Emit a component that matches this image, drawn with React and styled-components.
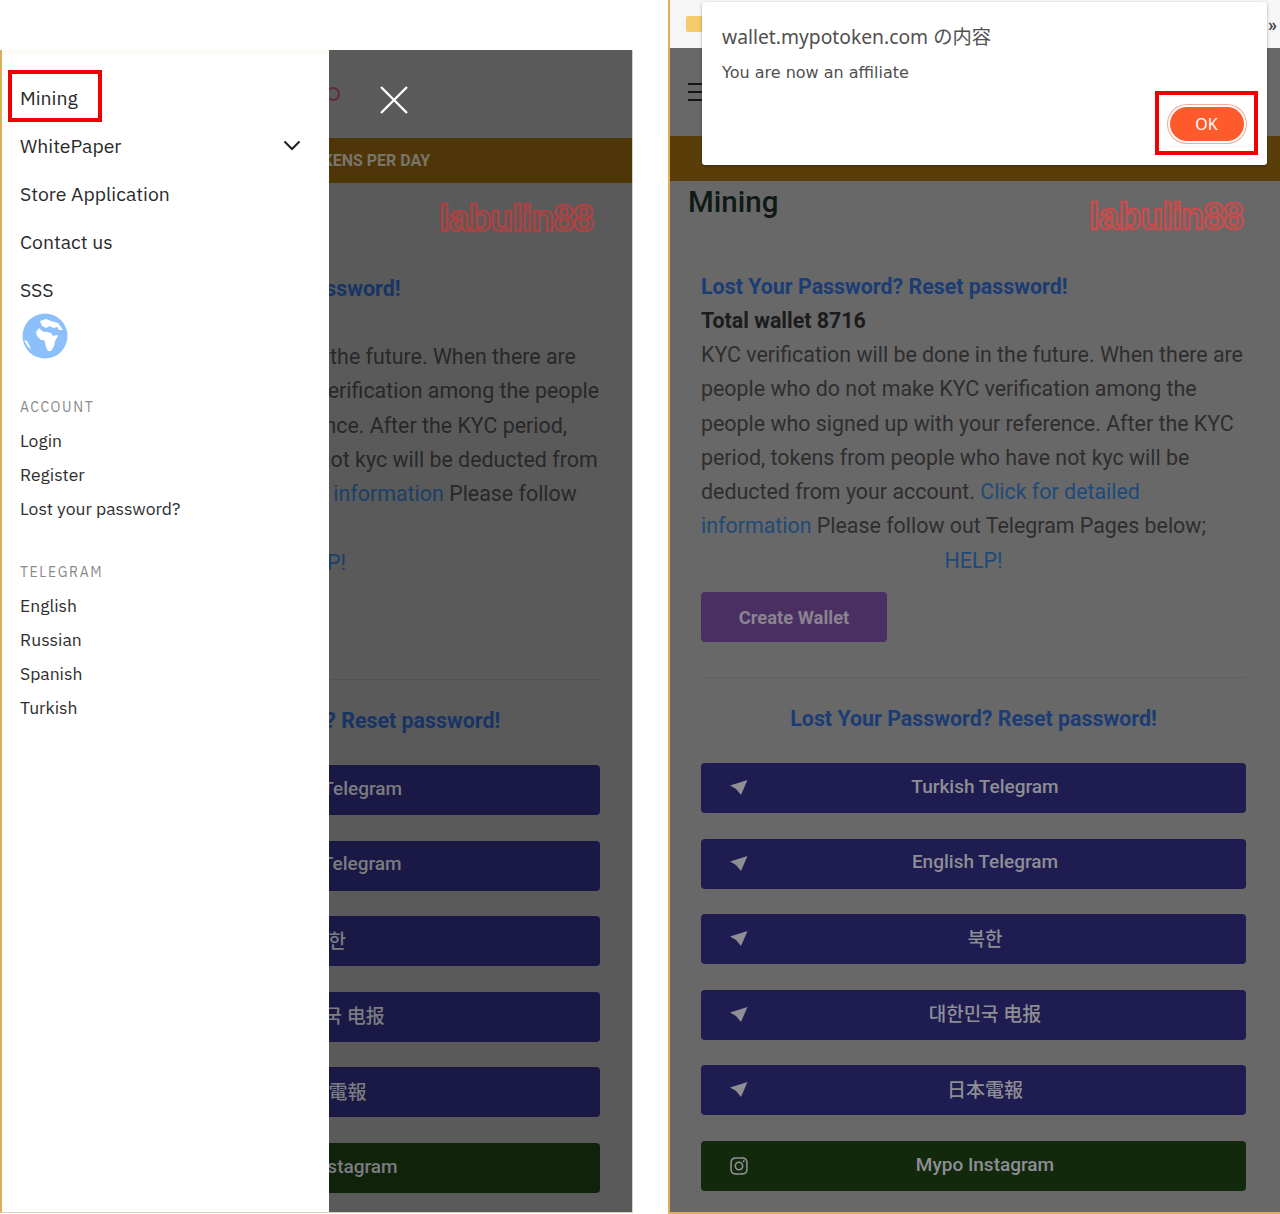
import styled, { createGlobalStyle } from "styled-components";
import { FaInstagram } from "react-icons/fa";

const GlobalStyle = createGlobalStyle`
  html, body {
    margin: 0;
    padding: 0;
    background: #fff;
    overflow: hidden;
  }
  * {
    box-sizing: border-box;
  }
`;

const Screen = styled.div`
  display: flex;
  gap: 35px;
  width: 1280px;
  height: 1214px;
  font-family: Roboto, "Noto Sans CJK KR", sans-serif;
`;

const LeftPhone = styled.section`
  position: relative;
  width: 633px;
  height: 1163px;
  margin-top: 50px;
  border-left: 2px solid #e0ad5c;
  border-right: 1px solid #d9d2c0;
  border-bottom: 1px solid #d9d2c0;
  overflow: hidden;
`;

const RightPhone = styled.section`
  position: relative;
  flex: 1;
  height: 1214px;
  border-left: 2px solid #e0ad5c;
  border-bottom: 2px solid #e0ad5c;
  overflow: hidden;
`;

const Scrim = styled.div`
  position: absolute;
  inset: 0;
  background: rgba(0, 0, 0, 0.13);
`;

/* browser chrome on the right shot */
const Toolbar = styled.div`
  display: flex;
  align-items: center;
  justify-content: space-between;
  height: 48px;
  padding: 0 3px 0 16px;
  background: #f6f6f6;
  color: #444;
  font-size: 18px;
  font-weight: 700;
`;

const Folder = styled.span`
  width: 20px;
  height: 16px;
  border-radius: 2px;
  background: #f5cb6c;
`;

const Page = styled.div`
  background: #686868;
  height: 100%;
`;

const Header = styled.header`
  display: flex;
  align-items: center;
  height: 88px;
  padding-left: 18px;
`;

const Burger = styled.span`
  width: 16px;
  height: 18px;
  border-top: 2px solid #141414;
  border-bottom: 2px solid #141414;
  background: linear-gradient(#141414, #141414) center / 100% 2px no-repeat;
`;

const LogoRing = styled.span`
  width: 14px;
  height: 14px;
  margin-left: 290px;
  border: 2px solid #6e3344;
  border-radius: 50%;
`;

const Band = styled.div`
  display: flex;
  align-items: center;
  justify-content: center;
  height: 45px;
  background: #5a3e0a;
  color: #8c8778;
  font-size: 16px;
  font-weight: 700;
`;

const BandText = styled.span`
  margin-left: 98px;
`;

const Content = styled.main`
  position: relative;
  padding: 0 ${(p) => p.$right}px 0 ${(p) => p.$left}px;
`;

const Title = styled.h1`
  height: 42px;
  margin: 0 0 47px -13px;
  color: #101a14;
  font-size: 29.5px;
  font-weight: 500;
  line-height: 42px;
`;

const Watermark = styled.div`
  position: absolute;
  top: 14px;
  right: ${(p) => p.$right}px;
  color: transparent;
  -webkit-text-stroke: 2.4px #c44e4e;
  font-family: "Liberation Sans", sans-serif;
  font-size: 37px;
  font-weight: 700;
  line-height: 44px;
  letter-spacing: -0.7px;
`;

const SectionLink = styled.h2`
  margin: 0;
  color: #1b3c74;
  font-size: 21.4px;
  font-weight: 700;
  line-height: 34px;
  text-align: ${(p) => (p.$center ? "center" : "left")};
`;

const Wallet = styled.div`
  color: #1c1c1c;
  font-size: 21.4px;
  font-weight: 700;
  line-height: 34px;
`;

const Body = styled.p`
  margin: 0;
  color: #2e2e2e;
  font-size: 21.4px;
  line-height: 34.3px;
`;

const Link = styled.a`
  color: #1f4a78;
`;

const Help = styled.div`
  color: #1f4a78;
  font-size: 21.4px;
  line-height: 34.3px;
  text-align: center;
`;

const CreateWallet = styled.button`
  display: block;
  width: 186px;
  height: 50px;
  margin-top: 14px;
  border: none;
  border-radius: 4px;
  background: #4a2f62;
  color: #8a8490;
  font-family: inherit;
  font-size: 18.4px;
  font-weight: 700;
`;

const Divider = styled.hr`
  height: 1px;
  margin: 35px 0 24px;
  border: none;
  background: #5f5f5f;
`;

const Buttons = styled.div`
  display: flex;
  flex-direction: column;
  gap: 25.6px;
  margin-top: 27px;
`;

const Social = styled.div`
  display: flex;
  align-items: center;
  height: 50px;
  border-radius: 4px;
  background: ${(p) => (p.$green ? "#12290c" : "#1e1c50")};
  color: #8e8e94;
  font-size: 19px;
  font-weight: 500;
`;

const SocialIcon = styled.span`
  display: flex;
  flex: none;
  width: 18px;
  margin: 0 -24px 1px 29px;
  font-size: 20px;
`;

const SocialLabel = styled.span`
  flex: 1;
  padding-bottom: 4px;
  text-align: center;
`;

/* menu drawer, left shot */
const Drawer = styled.aside`
  position: absolute;
  top: 0;
  bottom: 0;
  left: 0;
  width: 327px;
  padding: 18px 0 0 18px;
  background: #fff;
  border-top: 5px solid #fdfbf5;
  font-family: "IBM Plex Sans", Roboto, sans-serif;
`;

const MainNav = styled.nav`
  display: flex;
  flex-direction: column;
`;

const NavItem = styled.a`
  display: flex;
  align-items: center;
  justify-content: space-between;
  height: 48px;
  padding-right: 28px;
  color: #2a2a2a;
  font-size: 19.4px;
`;

const Globe = styled.svg`
  display: block;
  width: 46px;
  height: 46px;
  margin: 0 0 0 2px;
`;

const GroupTitle = styled.div`
  margin-top: ${(p) => p.$top}px;
  color: #8a8a8a;
  font-size: 14px;
  line-height: 20px;
  letter-spacing: 1.6px;
`;

const SubNav = styled.div`
  display: flex;
  flex-direction: column;
  margin-top: 7px;
`;

const SubItem = styled.a`
  color: #2e2e2e;
  font-size: 17.5px;
  line-height: 34px;
`;

const Marked = styled.div`
  position: absolute;
  top: 20px;
  left: 6px;
  width: 94px;
  height: 52px;
  border: 4px solid #f00000;
`;

const CloseIcon = styled.svg`
  position: absolute;
  top: 35px;
  left: 377px;
  width: 30px;
  height: 30px;
`;

/* browser alert, right shot */
const Alert = styled.div`
  position: absolute;
  top: 2px;
  left: 32px;
  width: 565px;
  height: 163px;
  padding: 22px 20px;
  border-radius: 3px;
  background: #fff;
  box-shadow: 0 1px 3px rgba(0, 0, 0, 0.35);
`;

const AlertTitle = styled.div`
  color: #505050;
  font-family: "Noto Sans", "Noto Sans CJK JP", sans-serif;
  font-size: 19.3px;
  line-height: 26px;
`;

const AlertText = styled.div`
  margin-top: 12px;
  color: #505050;
  font-family: "DejaVu Sans", sans-serif;
  font-size: 16px;
  line-height: 22px;
`;

const OkFrame = styled.div`
  position: absolute;
  top: 91px;
  right: 22px;
  display: flex;
  align-items: center;
  justify-content: center;
  width: 103px;
  height: 64px;
  border: 4px solid #f00000;
`;

const OkButton = styled.button`
  width: 74px;
  height: 34px;
  margin-top: 2px;
  border: none;
  border-radius: 17px;
  background: #ff5a2b;
  box-shadow: 0 0 0 2px #fff, 0 0 0 3px #f7a99a;
  color: #fff;
  font-family: "Noto Sans", sans-serif;
  font-size: 16px;
`;

const socials = [
  { label: "Turkish Telegram" },
  { label: "English Telegram" },
  { label: "북한" },
  { label: "대한민국 电报" },
  { label: "日本電報", jp: true },
  { label: "Mypo Instagram", green: true },
];

function PlaneIcon() {
  return (
    <svg width="18" height="15" viewBox="0 0 18 15" fill="currentColor">
      <path d="M17.5 0 0 5.5 6 9l5 6z" />
    </svg>
  );
}

function PageBody({ left, right, markRight }) {
  return (
    <Page>
      <Header>
        <Burger />
        <LogoRing />
      </Header>
      <Band>
        <BandText>TOKENS PER DAY</BandText>
      </Band>
      <Content $left={left} $right={right}>
        <Title>Mining</Title>
        <Watermark $right={markRight}>labulin88</Watermark>
        <SectionLink>Lost Your Password? Reset password!</SectionLink>
        <Wallet>Total wallet 8716</Wallet>
        <Body>
          KYC verification will be done in the future. When there are people
          who do not make KYC verification among the people who signed up with
          your reference. After the KYC period, tokens from people who have not
          kyc will be deducted from your account.{" "}
          <Link>Click for detailed information</Link> Please follow out Telegram
          Pages below;
        </Body>
        <Help>HELP!</Help>
        <CreateWallet>Create Wallet</CreateWallet>
        <Divider />
        <SectionLink $center>Lost Your Password? Reset password!</SectionLink>
        <Buttons>
          {socials.map((s) => (
            <Social key={s.label} $green={s.green}>
              <SocialIcon>{s.green ? <FaInstagram /> : <PlaneIcon />}</SocialIcon>
              <SocialLabel lang={s.jp ? "ja" : undefined}>{s.label}</SocialLabel>
            </Social>
          ))}
        </Buttons>
      </Content>
    </Page>
  );
}

function GlobeIcon() {
  return (
    <Globe viewBox="0 0 46 46">
      <circle cx="23" cy="23" r="22.5" fill="#8cc0fb" />
      <path
        fill="#fff"
        d="M17 15l-3 4 1 4 4 4h3l1 2 1 5 2 4h3l3-5 1-5 3-5-1-1-4 1-2-3-4-1h-3l-3-2zM18 8l6-2 5 2 7 2 5 7h-4l-2-3-4 1-3-2-4 2-4-2zM2 27l3 1 4 8-3-2z"
      />
    </Globe>
  );
}

function Menu() {
  return (
    <Drawer>
      <MainNav>
        <NavItem>Mining</NavItem>
        <NavItem>
          WhitePaper
          <svg width="18" height="11" viewBox="0 0 18 11" fill="none">
            <path d="M1.5 1.5 9 9l7.5-7.5" stroke="#222" strokeWidth="2" />
          </svg>
        </NavItem>
        <NavItem>Store Application</NavItem>
        <NavItem>Contact us</NavItem>
        <NavItem>SSS</NavItem>
      </MainNav>
      <GlobeIcon />
      <GroupTitle $top={38}>ACCOUNT</GroupTitle>
      <SubNav>
        <SubItem>Login</SubItem>
        <SubItem>Register</SubItem>
        <SubItem>Lost your password?</SubItem>
      </SubNav>
      <GroupTitle $top={36}>TELEGRAM</GroupTitle>
      <SubNav>
        <SubItem>English</SubItem>
        <SubItem>Russian</SubItem>
        <SubItem>Spanish</SubItem>
        <SubItem>Turkish</SubItem>
      </SubNav>
    </Drawer>
  );
}

export default function App() {
  return (
    <Screen>
      <GlobalStyle />
      <LeftPhone>
        <PageBody left={32} right={32} markRight={39} />
        <Scrim />
        <Menu />
        <Marked />
        <CloseIcon viewBox="0 0 30 30" fill="none">
          <path d="M2 2l26 26M28 2 2 28" stroke="#fff" strokeWidth="2.4" />
        </CloseIcon>
      </LeftPhone>
      <RightPhone>
        <Toolbar>
          <Folder />
          <span>»</span>
        </Toolbar>
        <PageBody left={31} right={34} markRight={37} />
        <Alert>
          <AlertTitle>wallet.mypotoken.com の内容</AlertTitle>
          <AlertText>You are now an affiliate</AlertText>
        </Alert>
        <OkFrame>
          <OkButton>OK</OkButton>
        </OkFrame>
      </RightPhone>
    </Screen>
  );
}
